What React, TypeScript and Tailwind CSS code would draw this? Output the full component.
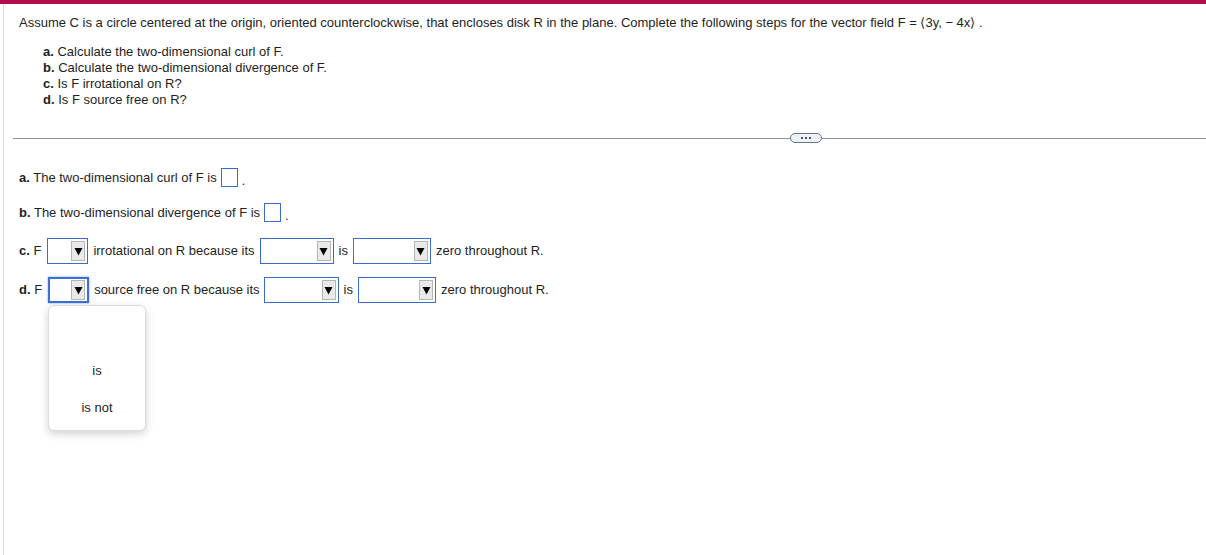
import React from "react";

const font = { fontFamily: '"Liberation Sans", Arial, sans-serif' };

function Select({ width, focused = false }: { width: number; focused?: boolean }) {
  return (
    <div
      className={
        "relative flex h-[26px] shrink-0 items-center justify-end bg-white " +
        (focused ? "border-2 border-[#3a6fd8] shadow-[0_0_2px_#7aa0ee]" : "border border-[#3b6cc9]")
      }
      style={{ width }}
    >
      <div className="mr-[2px] flex h-[20px] w-[14px] items-center justify-center border border-[#b5b5b5] bg-[#e9e9e9]">
        <svg width="9" height="9" viewBox="0 0 9 9">
          <polygon points="0.5,1 8.5,1 4.5,8.5" fill="#000" />
        </svg>
      </div>
    </div>
  );
}

function Box() {
  return <span className="inline-block h-[19px] w-[17px] shrink-0 border border-[#3b6cc9] bg-white" />;
}

export default function App() {
  return (
    <div className="relative min-h-[555px] w-[1206px] overflow-hidden bg-white text-[13px] leading-[16px] text-[#1e1e1e]" style={font}>
      <div className="h-[4px] bg-[#b10e4b]" />
      <div className="ml-[3px] min-h-[551px] border-l border-[#d4d9e4]">
        <div className="pl-[15px] pt-[11px]">
          <p>
            Assume C is a circle centered at the origin, oriented counterclockwise, that encloses disk R in the plane. Complete the following steps for the vector field F = ⟨3y, − 4x⟩ .
          </p>
          <div className="mt-[13px] pl-[24px]">
            <p><b>a.</b> Calculate the two-dimensional curl of F.</p>
            <p><b>b.</b> Calculate the two-dimensional divergence of F.</p>
            <p><b>c.</b> Is F irrotational on R?</p>
            <p><b>d.</b> Is F source free on R?</p>
          </div>
        </div>

        <div className="relative ml-[9px] mt-[30px] h-px bg-[#8b95a3]">
          <div className="absolute left-[777px] top-[-5px] flex h-[10px] w-[32px] items-center justify-center gap-[2px] rounded-full border border-[#66768a] bg-[#eef1f5]">
            <span className="h-[2px] w-[2px] bg-[#4a5668]" />
            <span className="h-[2px] w-[2px] bg-[#4a5668]" />
            <span className="h-[2px] w-[2px] bg-[#4a5668]" />
          </div>
        </div>

        <div className="pl-[15px]">
          <div className="mt-[29px] flex h-[19px] items-center gap-[4px]">
            <span><b>a.</b> The two-dimensional curl of F is</span>
            <Box />
            <span className="self-end leading-[12px]">.</span>
          </div>
          <div className="mt-[16px] flex h-[19px] items-center gap-[4px]">
            <span><b>b.</b> The two-dimensional divergence of F is</span>
            <Box />
            <span className="self-end leading-[12px]">.</span>
          </div>

          <div className="mt-[16px] flex h-[26px] items-center gap-[5px]">
            <span className="mr-[1px]"><b>c.</b> F</span>
            <Select width={41} />
            <span>irrotational on R because its</span>
            <Select width={74} />
            <span>is</span>
            <Select width={78} />
            <span>zero throughout R.</span>
          </div>

          <div className="relative mt-[13px] flex h-[26px] items-center gap-[5px]">
            <span className="mr-[1px]"><b>d.</b> F</span>
            <Select width={41} focused />
            <span className="-mr-[1px]">source free on R because its</span>
            <Select width={75} />
            <span>is</span>
            <Select width={78} />
            <span>zero throughout R.</span>

            <div className="absolute left-[29px] top-[28px] z-10 flex h-[126px] w-[98px] flex-col items-center rounded-[6px] border border-[#dcdcdc] bg-white shadow-[0_3px_8px_rgba(0,0,0,0.18)]">
              <span className="mt-[57px]">is</span>
              <span className="mt-[21px]">is not</span>
            </div>
          </div>
        </div>
      </div>
    </div>
  );
}
